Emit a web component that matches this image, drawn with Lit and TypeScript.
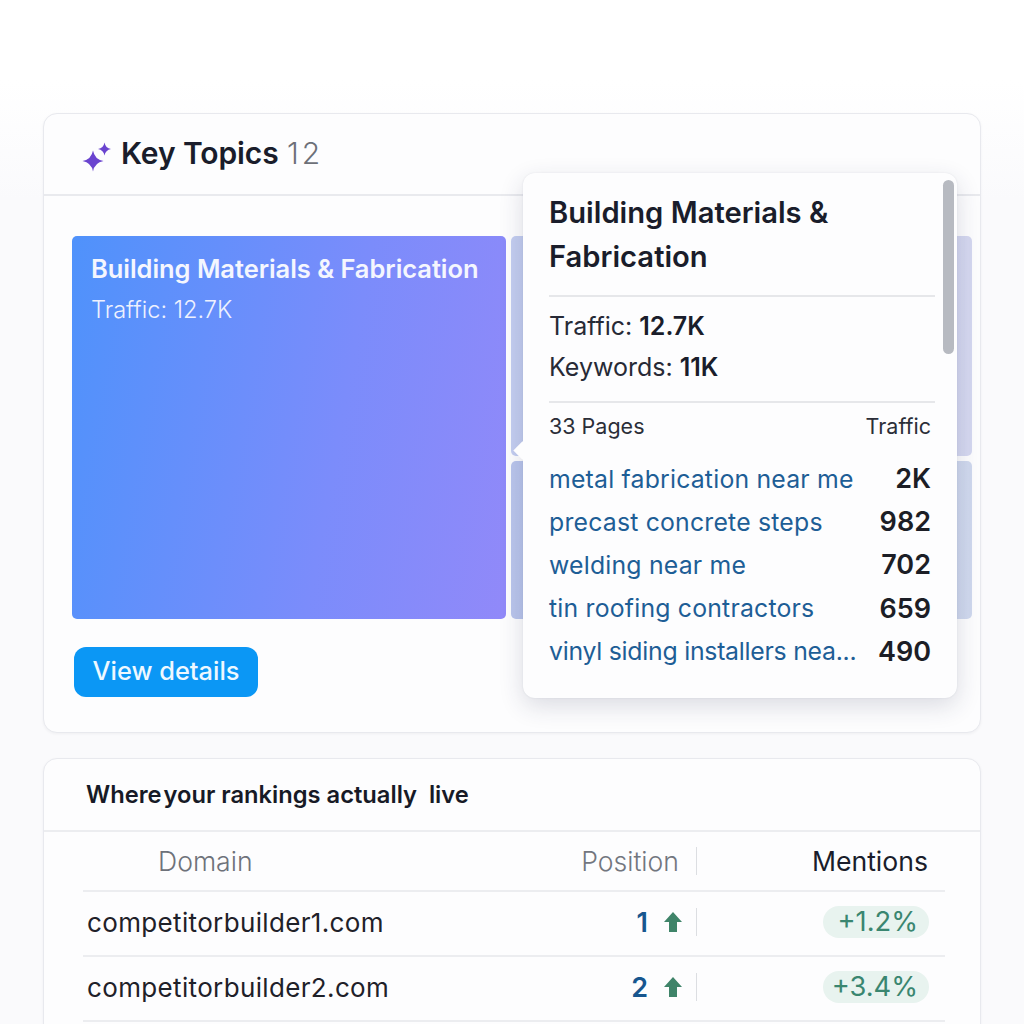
import { LitElement, html, css } from "lit";
import { customElement } from "lit/decorators.js";

const PAGES: [string, string][] = [
  ["metal fabrication near me", "2K"],
  ["precast concrete steps", "982"],
  ["welding near me", "702"],
  ["tin roofing contractors", "659"],
  ["vinyl siding installers nea...", "490"],
];

const ROWS: [string, string, string][] = [
  ["competitorbuilder1.com", "1", "+1.2%"],
  ["competitorbuilder2.com", "2", "+3.4%"],
];

@customElement("app-root")
export class AppRoot extends LitElement {
  static styles = css`
    :host {
      display: block;
      height: 1024px;
      overflow: hidden;
      background: linear-gradient(#ffffff 0, #ffffff 80px, #fafafc 200px);
      font-family: Inter, "Liberation Sans", sans-serif;
      color: #1a1d2b;
    }
    .page {
      padding: 113px 43px 0;
      display: flex;
      flex-direction: column;
      gap: 25px;
    }
    .card {
      position: relative;
      background: #fdfdfe;
      border: 1px solid #e8e9ee;
      border-radius: 14px;
      box-shadow: 0 1px 3px rgba(30, 35, 60, 0.05);
    }
    .head {
      height: 82px;
      box-sizing: border-box;
      padding: 0 0 3px 38px;
      display: flex;
      align-items: center;
      gap: 9px;
      border-bottom: 2px solid #e9eaee;
    }
    .head svg { flex: none; margin-top: 8px; }
    .head h2 {
      margin: 0;
      font-size: 30px;
      font-weight: 600;
      letter-spacing: -0.1px;
    }
    .head .count { font-weight: 300; color: #6d7078; letter-spacing: 3px; margin-left: 1px; }
    .body { padding: 40px 9px 35px 28px; }
    .map {
      display: grid;
      grid-template-columns: 434px 461px;
      grid-template-rows: 220px 158px;
      gap: 5px;
      height: 383px;
    }
    .main {
      grid-row: 1 / 3;
      border-radius: 5px;
      box-sizing: border-box;
      padding: 19px 19px;
      color: #fff;
      background: linear-gradient(100deg, #4f92fb 0%, #7b8cfb 60%, #9189f9 100%);
    }
    .main .t { font-size: 25.5px; font-weight: 600; line-height: 28px; color: #f4f6fe; white-space: nowrap; letter-spacing: -0.05px; }
    .main .s { font-size: 23.6px; font-weight: 300; line-height: 28px; margin-top: 13px; color: #eef1fe; }
    .tile { border-radius: 5px; }
    .tile.a { background: linear-gradient(90deg, #c3cdf0, #d5d8f0); }
    .tile.b { background: linear-gradient(90deg, #b9c5ec, #d0d9ee); }
    .btn {
      display: inline-flex;
      align-items: center;
      justify-content: center;
      box-sizing: border-box;
      width: 184px;
      height: 50px;
      margin: 28px 0 0 2px;
      padding-bottom: 4px;
      background: #0b97f5;
      color: #eef8ff;
      border-radius: 12px;
      font-size: 25.4px;
      font-weight: 500;
    }
    .pop {
      position: absolute;
      left: 479px;
      top: 59px;
      width: 434px;
      height: 525px;
      box-sizing: border-box;
      padding: 18px 22px 0 26px;
      background: #fdfdfe;
      border-radius: 12px;
      box-shadow: 0 8px 24px rgba(40, 45, 80, 0.16), 0 0 2px rgba(40, 45, 80, 0.1);
    }
    .pop::before {
      content: "";
      position: absolute;
      left: -7px;
      top: 271px;
      width: 13px;
      height: 13px;
      background: #fdfdfe;
      transform: rotate(45deg);
    }
    .scroll {
      position: absolute;
      right: 3px;
      top: 7px;
      width: 11px;
      height: 174px;
      border-radius: 6px;
      background: #b7bac1;
    }
    .pop h3 {
      margin: 0;
      font-size: 29.2px;
      font-weight: 600;
      line-height: 44px;
      padding-bottom: 16px;
      border-bottom: 2px solid #e6e7ea;
      position: relative;
    }
    .stats {
      padding: 9px 0 13px;
      border-bottom: 2px solid #e6e7ea;
      font-size: 25px;
      line-height: 41px;
      font-weight: 400;
      color: #272a36;
    }
    .stats b { font-weight: 600; color: #1a1d2b; }
    .phead {
      display: flex;
      justify-content: space-between;
      padding: 6px 4px 0 0;
      font-size: 21.5px;
      line-height: 34px;
      color: #2b2e38;
    }
    .plist { margin-top: 14px; }
    .prow {
      display: flex;
      justify-content: space-between;
      align-items: center;
      height: 43.2px;
      font-size: 24.8px;
      padding-right: 4px;
    }
    .prow a {
      color: #1e5e96;
      white-space: nowrap;
      letter-spacing: 0.2px;
    }
    .prow:last-child a { letter-spacing: -0.25px; }
    .prow b { font-weight: 600; font-size: 27px; color: #1c1e26; }
    .card2 { height: 400px; }
    .head2 {
      height: 73px;
      box-sizing: border-box;
      padding: 0 0 0 42px;
      display: flex;
      align-items: center;
      border-bottom: 2px solid #ecedf0;
      font-size: 23.7px;
      font-weight: 600;
      color: #171a26;
      white-space: pre;
    }
    .tight { margin-right: -4px; }
    .table { padding: 0 35px 0 39px; }
    .tr {
      display: grid;
      grid-template-columns: 1fr 150px 248px;
      align-items: center;
      height: 65px;
      box-sizing: border-box;
      padding-bottom: 3px;
      border-bottom: 2px solid #ecedf0;
    }
    .tr.th { height: 60px; padding-bottom: 0; font-size: 26.6px; font-weight: 400; }
    .th .d { color: #6e727a; padding-left: 75px; font-weight: 300; }
    .th .p { color: #72767e; text-align: right; padding-right: 18px; font-weight: 300; }
    .th .m { color: #1a1d2b; text-align: right; padding-right: 17px; }
    .dom { font-size: 26px; padding-left: 4px; color: #1f2129; font-weight: 400; letter-spacing: 0.35px; }
    .pos {
      display: flex;
      justify-content: flex-end;
      align-items: center;
      gap: 16px;
      padding-right: 15px;
      font-size: 27px;
      font-weight: 600;
      color: #17568f;
    }
    .cell-p { position: relative; }
    .cell-p::after {
      content: "";
      position: absolute;
      right: 0;
      top: 50%;
      height: 28px;
      margin-top: -14px;
      width: 1.5px;
      background: #dcdee2;
    }
    .delta { display: flex; justify-content: flex-end; padding-right: 16px; }
    .pill {
      display: inline-block;
      width: 106px;
      height: 32px;
      box-sizing: border-box;
      text-align: right;
      padding-right: 11px;
      line-height: 32px;
      font-size: 27.3px;
      border-radius: 16px;
      background: #e8f3ef;
      color: #3a8670;
    }
  `;

  render() {
    return html`<div class="page">
      <section class="card">
        <div class="head">
          <svg width="30" height="30" viewBox="0 0 30 30" fill="#6a44cf">
            <path d="M11 8.500Q12.600 17.400 21.500 19Q12.600 20.600 11 29.500Q9.400 20.600 0.500 19Q9.400 17.400 11 8.500Z" />
            <path d="M22.500 0.500Q23.500 6 29 7Q23.500 8 22.500 13.500Q21.500 8 16 7Q21.500 6 22.500 0.500Z" />
          </svg>
          <h2>Key Topics <span class="count">12</span></h2>
        </div>
        <div class="body">
          <div class="map">
            <div class="main">
              <div class="t">Building Materials &amp; Fabrication</div>
              <div class="s">Traffic: 12.7K</div>
            </div>
            <div class="tile a"></div>
            <div class="tile b"></div>
          </div>
          <div class="btn">View details</div>
        </div>
        <div class="pop">
          <div class="scroll"></div>
          <h3>Building Materials &amp;<br />Fabrication</h3>
          <div class="stats">
            <div>Traffic: <b>12.7K</b></div>
            <div>Keywords: <b>11K</b></div>
          </div>
          <div class="phead"><span>33 Pages</span><span>Traffic</span></div>
          <div class="plist">
            ${PAGES.map(
              ([n, v]) => html`<div class="prow"><a>${n}</a><b>${v}</b></div>`
            )}
          </div>
        </div>
      </section>
      <section class="card card2">
        <div class="head2"><span><span class="tight">Where</span> your rankings actually  live</span></div>
        <div class="table">
          <div class="tr th">
            <div class="d">Domain</div>
            <div class="p cell-p">Position</div>
            <div class="m">Mentions</div>
          </div>
          ${ROWS.map(
            ([d, p, m]) => html`<div class="tr">
              <div class="dom">${d}</div>
              <div class="pos cell-p">
                <span>${p}</span>
                <svg width="18" height="20" viewBox="0 0 18 20" fill="#3f8469">
                  <path d="M9 0L18 10H13V20H5V10H0Z" />
                </svg>
              </div>
              <div class="delta"><span class="pill">${m}</span></div>
            </div>`
          )}
          <div class="tr"></div>
        </div>
      </section>
    </div>`;
  }
}
